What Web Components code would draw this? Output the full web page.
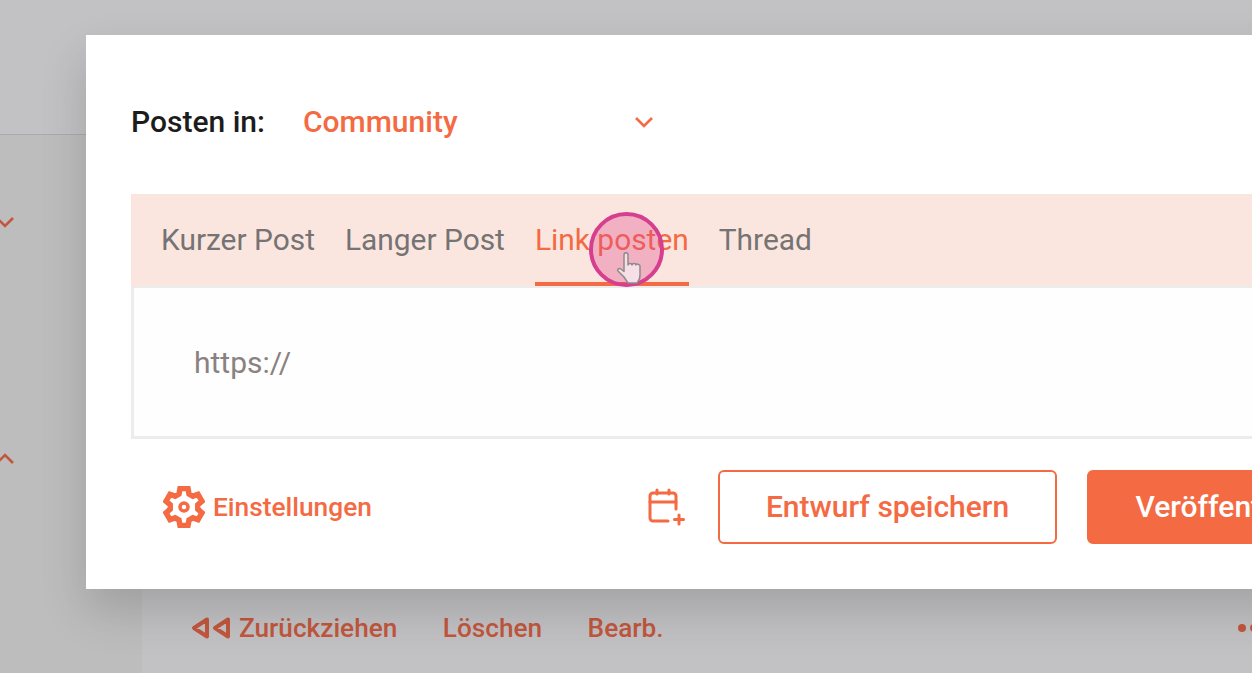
<!DOCTYPE html>
<html lang="de">
<head>
<meta charset="utf-8">
<title>Posten</title>
<style>
  html, body { margin: 0; height: 100%; overflow: hidden; }
  body { font-family: Roboto, "Liberation Sans", sans-serif; background: #c2c2c4; }
</style>
</head>
<body>
<back-page></back-page>
<post-dialog></post-dialog>
<click-marker></click-marker>

<script>
// outline of the six tooth settings gear, centred on 21,21
function gearPath() {
  const pts = [];
  for (let i = 0; i < 6; i++) {
    const a = (i * 60 - 90) * Math.PI / 180;
    const cos = Math.cos(a), sin = Math.sin(a);
    const at = (r, w) => `${(21 + r * cos - w * sin).toFixed(1)} ${(21 + r * sin + w * cos).toFixed(1)}`;
    pts.push(at(13, -5), at(18.500, -4), at(18.500, 4), at(13, 5));
  }
  return 'M' + pts.join('L') + 'z';
}

// page behind the dialog, dimmed by the overlay colours
class BackPage extends HTMLElement {
  constructor() {
    super();
    this.attachShadow({ mode: 'open' });
  }

  connectedCallback() {
    this.shadowRoot.innerHTML = `
      <style>
        :host { display: flex; flex-direction: column; width: 1252px; height: 673px; color: #c2573d; }
        .top { height: 134px; flex: none; background: #c2c2c4; border-bottom: 1px solid #aaaaab; }
        .row { flex: 1; display: flex; min-height: 0; }
        .side { width: 142px; flex: none; background: #bdbdbe; position: relative; }
        .side svg { position: absolute; left: -6px; width: 22px; height: 14px; }
        .main { flex: 1; background: #c2c2c4; display: flex; align-items: flex-end; padding: 0 0 28px 49px; gap: 45.5px; font: 500 26.2px/34px Roboto, sans-serif; position: relative; }
        .back { display: flex; align-items: center; gap: 7px; }
        .back svg { width: 41px; height: 24px; }
        .dots { position: absolute; left: 1096px; bottom: 41px; display: flex; gap: 4px; }
        .dots i { width: 8px; height: 8px; border-radius: 50%; background: currentColor; }
      </style>
      <div class="top"></div>
      <div class="row">
        <div class="side">
          <svg style="top:80px" viewBox="0 0 22 14"><path d="M3 3l8 8 8-8" fill="none" stroke="currentColor" stroke-width="2.6"/></svg>
          <svg style="top:317px" viewBox="0 0 22 14"><path d="M3 11l8-8 8 8" fill="none" stroke="currentColor" stroke-width="2.6"/></svg>
        </div>
        <div class="main">
          <span class="back">
            <svg viewBox="0 0 41 24"><path d="M16 3.500L3 12l13 8.500zM37 3.500L24 12l13 8.500z" fill="none" stroke="currentColor" stroke-width="4" stroke-linejoin="round"/></svg>
            Zurückziehen
          </span>
          <span>Löschen</span>
          <span>Bearb.</span>
          <span class="dots"><i></i><i></i><i></i></span>
        </div>
      </div>
    `;
  }
}

class PostTabs extends HTMLElement {
  constructor() {
    super();
    this.attachShadow({ mode: 'open' });
  }

  connectedCallback() {
    const active = this.getAttribute('active');
    const tabs = ['Kurzer Post', 'Langer Post', 'Link posten', 'Thread'];
    this.shadowRoot.innerHTML = `
      <style>
        :host { display: flex; gap: 30px; height: 92px; padding-left: 30px; background: #fbe6df; font: 400 29.9px/1 Roboto, sans-serif; color: #757373; }
        a { display: flex; align-items: center; height: 92px; padding-top: 4px; box-sizing: border-box; border-bottom: 4px solid transparent; }
        a.on { color: #f46a43; border-bottom-color: #f46a43; }
      </style>
      ${tabs.map(t => `<a class="${t === active ? 'on' : ''}">${t}</a>`).join('')}
    `;
  }
}

class PostDialog extends HTMLElement {
  constructor() {
    super();
    this.attachShadow({ mode: 'open' });
  }

  connectedCallback() {
    this.shadowRoot.innerHTML = `
      <style>
        :host {
          display: block;
          position: absolute;
          left: 86px;
          top: 35px;
          width: 1300px;
          height: 554px;
          box-sizing: border-box;
          padding-left: 45px;
          background: #fff;
          box-shadow: 0 22px 44px rgba(0, 0, 0, .16);
          font-family: Roboto, sans-serif;
        }
        .target { display: flex; align-items: center; height: 159px; padding-top: 14px; font: 500 30px/1 Roboto, sans-serif; box-sizing: border-box; }
        .target b { font-weight: 500; color: #1c1c1c; width: 172px; }
        .target span { color: #f46a43; width: 330px; }
        .target svg { width: 22px; height: 14px; color: #f46a43; }
        .box { height: 153px; box-sizing: border-box; border: 3px solid #ececec; border-top-width: 2px; padding-left: 60px; display: flex; align-items: center; font-size: 30px; color: #8a8180; background: #fefefe; }
        .foot { display: flex; align-items: center; height: 136px; padding-left: 32px; }
        .settings { display: flex; align-items: center; gap: 8px; width: 485px; flex: none; color: #f46a43; font: 500 26.3px/1 Roboto, sans-serif; }
        .settings svg { width: 42px; height: 42px; }
        .cal { width: 38px; height: 38px; margin-right: 32px; flex: none; color: #f46a43; }
        .btn { height: 74px; box-sizing: border-box; border-radius: 6px; border: 2.5px solid #f46a43; display: flex; align-items: center; justify-content: center; font: 500 30px/1 Roboto, sans-serif; flex: none; }
        .draft { width: 339px; color: #f46a43; background: #fff; margin-right: 30px; }
        .pub { width: 303px; color: #fff; background: #f46a43; }
      </style>
      <div class="target">
        <b>Posten in:</b>
        <span>Community</span>
        <svg viewBox="0 0 22 14"><path d="M3 3l8 8 8-8" fill="none" stroke="currentColor" stroke-width="2.600"/></svg>
      </div>
      <post-tabs active="Link posten"></post-tabs>
      <div class="box">https://</div>
      <div class="foot">
        <div class="settings">
          <svg viewBox="0 0 42 42">
            <path d="${gearPath()}" fill="none" stroke="currentColor" stroke-width="5.500" stroke-linejoin="miter"/>
            <circle cx="21" cy="21" r="4" fill="none" stroke="currentColor" stroke-width="3.500"/>
          </svg>
          Einstellungen
        </div>
        <svg class="cal" viewBox="0 0 38 38" fill="none" stroke="currentColor" stroke-width="3" stroke-linecap="round" stroke-linejoin="round">
          <path d="M20 33H5a3 3 0 0 1-3-3V8a3 3 0 0 1 3-3h20a3 3 0 0 1 3 3v13"/>
          <path d="M2 14h26M9 2v4M21 2v4M31 27v9M26.500 31.500h9"/>
        </svg>
        <button-like class="btn draft">Entwurf speichern</button-like>
        <button-like class="btn pub">Veröffentlichen</button-like>
      </div>
    `;
  }
}

// recording highlight round the mouse pointer
class ClickMarker extends HTMLElement {
  constructor() {
    super();
    this.attachShadow({ mode: 'open' });
  }

  connectedCallback() {
    this.shadowRoot.innerHTML = `
      <style>
        :host { display: block; position: absolute; left: 589px; top: 212px; width: 75px; height: 75px; box-sizing: border-box; border: 4px solid #d63f8f; border-radius: 50%; background: rgba(226, 70, 140, .33); }
        svg { position: absolute; left: 23px; top: 35px; width: 32px; height: 38px; }
      </style>
      <svg viewBox="0 0 32 38">
        <path d="M8 26L2 20c-1-1.500 1-3.500 3-2l3 2.500V4c0-3 4-3 4 0v10c0-2 4-2 4 0 0-2 4-2 4 0 0-1.500 4-1 4 1v9c0 4-2 7-3 8H12z" fill="#f6dfe6" stroke="#8f8a8c" stroke-width="1.500" stroke-linejoin="round"/>
      </svg>
    `;
  }
}

class ButtonLike extends HTMLElement {
  constructor() {
    super();
    this.attachShadow({ mode: 'open' });
    this.shadowRoot.innerHTML = `<style>:host { display: inline-flex; cursor: pointer; }</style><slot></slot>`;
  }
}

customElements.define('button-like', ButtonLike);
customElements.define('back-page', BackPage);
customElements.define('post-tabs', PostTabs);
customElements.define('post-dialog', PostDialog);
customElements.define('click-marker', ClickMarker);
</script>
</body>
</html>
